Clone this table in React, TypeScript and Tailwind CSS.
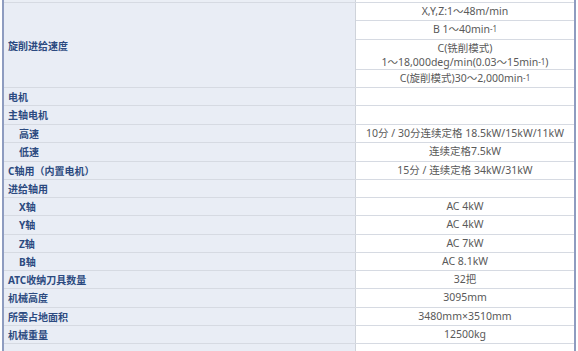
import React from 'react';

type Row = { label: string; value: React.ReactNode; indent?: boolean; h: string };

const Sup = ({ children }: { children: React.ReactNode }) => (
  <sup className="relative -top-[1px] text-[8px]">{children}</sup>
);

const rows: Row[] = [
  { label: '电机', value: '', h: 'h-[18px]' },
  { label: '主轴电机', value: '', h: 'h-[19px]' },
  { label: '高速', value: '10分 / 30分连续定格 18.5kW/15kW/11kW', indent: true, h: 'h-[18px]' },
  { label: '低速', value: '连续定格7.5kW', indent: true, h: 'h-[19px]' },
  { label: 'C轴用（内置电机）', value: '15分 / 连续定格 34kW/31kW', h: 'h-[18px]' },
  { label: '进给轴用', value: '', h: 'h-[18px]' },
  { label: 'X轴', value: 'AC 4kW', indent: true, h: 'h-[18px]' },
  { label: 'Y轴', value: 'AC 4kW', indent: true, h: 'h-[19px]' },
  { label: 'Z轴', value: 'AC 7kW', indent: true, h: 'h-[18px]' },
  { label: 'B轴', value: 'AC 8.1kW', indent: true, h: 'h-[18px]' },
  { label: 'ATC收纳刀具数量', value: '32把', h: 'h-[18px]' },
  { label: '机械高度', value: '3095mm', h: 'h-[19px]' },
  { label: '所需占地面积', value: '3480mm×3510mm', h: 'h-[18px]' },
  { label: '机械重量', value: '12500kg', h: 'h-[18px]' },
];

export default function App() {
  return (
    <div
      className="w-[578px] h-[351px] overflow-hidden bg-white pl-[2px]"
      style={{ fontFamily: '"Noto Sans", "Noto Sans CJK SC", sans-serif' }}
    >
      <div className="w-[574px] h-full border-x-2 border-[#8e9cc0] flex flex-col">
        {/* cropped row above */}
        <div className="grid grid-cols-[352px_1fr] h-[3px] shrink-0 border-b border-[#d6dae2]">
          <div className="bg-[#eaeef5] border-r border-[#cfd3da]" />
          <div />
        </div>

        {/* 旋削进给速度 */}
        <div className="grid grid-cols-[352px_1fr] shrink-0 border-b border-[#d6dae2]">
          <div className="bg-[#e9edf5] border-r border-[#cfd3da] flex items-center pl-[4px] pt-[3px] font-bold text-[10px] text-[#2c4a80]">
            旋削进给速度
          </div>
          <div className="flex flex-col text-[#595959] text-[10.5px] text-center">
            <div className="h-[18px] flex items-center justify-center border-b border-[#d6dae2]">X,Y,Z:1～48m/min</div>
            <div className="h-[19px] flex items-center justify-center border-b border-[#d6dae2]">
              <span>B 1～40min<Sup>-1</Sup></span>
            </div>
            <div className="h-[30px] flex flex-col items-center justify-center leading-[14px] border-b border-[#d6dae2]">
              <span>C(铣削模式)</span>
              <span>1～18,000deg/min(0.03～15min<Sup>-1</Sup>)</span>
            </div>
            <div className="h-[17px] flex items-center justify-center">
              <span>C(旋削模式)30～2,000min<Sup>-1</Sup></span>
            </div>
          </div>
        </div>

        {rows.map((r) => (
          <div key={r.label} className={`grid grid-cols-[352px_1fr] shrink-0 border-b border-[#d6dae2] ${r.h}`}>
            <div
              className={`bg-[#e9edf5] border-r border-[#cfd3da] flex items-center pt-[1px] font-bold text-[10px] text-[#2c4a80] ${
                r.indent ? 'pl-[15px]' : 'pl-[4px]'
              }`}
            >
              {r.label}
            </div>
            <div className="flex items-center justify-center text-[10.5px] text-[#595959]">{r.value}</div>
          </div>
        ))}

        <div className="grid grid-cols-[352px_1fr] flex-1">
          <div className="bg-[#e9edf5] border-r border-[#cfd3da]" />
          <div />
        </div>
      </div>
    </div>
  );
}
